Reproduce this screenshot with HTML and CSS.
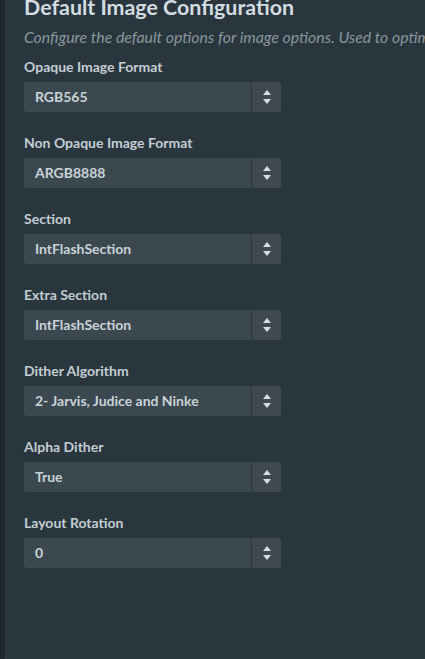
FILE: index.html
```html
<!doctype html>
<html lang="en">
<head>
  <meta charset="UTF-8">
  <meta name="viewport" content="width=device-width, initial-scale=1.0">
  <title>Default Image Configuration</title>
  <link rel="stylesheet" href="styles.css">
</head>
<body>
  <div class="gutter"></div>

  <main class="panel">
    <h1 class="panel-title">Default Image Configuration</h1>
    <p class="panel-desc">Configure the default options for image options. Used to optimize the generated images.</p>

    <div class="field">
      <label class="field-label">Opaque Image Format</label>
      <div class="select"><span class="select-value">RGB565</span><span class="select-arrows"></span></div>
    </div>

    <div class="field">
      <label class="field-label">Non Opaque Image Format</label>
      <div class="select"><span class="select-value">ARGB8888</span><span class="select-arrows"></span></div>
    </div>

    <div class="field">
      <label class="field-label">Section</label>
      <div class="select"><span class="select-value">IntFlashSection</span><span class="select-arrows"></span></div>
    </div>

    <div class="field">
      <label class="field-label">Extra Section</label>
      <div class="select"><span class="select-value">IntFlashSection</span><span class="select-arrows"></span></div>
    </div>

    <div class="field">
      <label class="field-label">Dither Algorithm</label>
      <div class="select"><span class="select-value">2- Jarvis, Judice and Ninke</span><span class="select-arrows"></span></div>
    </div>

    <div class="field">
      <label class="field-label">Alpha Dither</label>
      <div class="select"><span class="select-value">True</span><span class="select-arrows"></span></div>
    </div>

    <div class="field">
      <label class="field-label">Layout Rotation</label>
      <div class="select"><span class="select-value">0</span><span class="select-arrows"></span></div>
    </div>
  </main>
</body>
</html>
```

FILE: styles.css
```css
html, body { margin: 0; height: 100%; }
body { display: flex; background: #2a363d; font-family: Lato, "Open Sans", sans-serif; color: #c7d1d7; overflow: hidden; }

.gutter { width: 5px; flex: none; background: #1e282e; border-right: 1px dotted #3b4850; }

.panel { flex: 1; min-width: 0; padding: 0 0 0 18px; }
.panel-title { margin: -5px 0 0; font-size: 21.4px; line-height: 24px; font-weight: 700; color: #d2dce1; white-space: nowrap; }
.panel-desc { margin: 8px 0 0; font-size: 15.8px; line-height: 20px; font-style: italic; color: #8a979f; white-space: nowrap; overflow: hidden; }

.field { margin-top: 11px; }
.field + .field { margin-top: 22px; }
.field-label { display: block; font-size: 14px; line-height: 18px; font-weight: 700; color: #c3cdd3; margin-bottom: 6px; }

.select { display: flex; width: 257px; height: 30px; border-radius: 3px; background: #3c484f; overflow: hidden; }
.select-value { flex: 1; padding-left: 11px; font-size: 14px; line-height: 30px; font-weight: 700; color: #c9d3d8; border-right: 1px solid #2b353b; }
.select-arrows { width: 29px; position: relative; background: #3e4a50; }
.select-arrows::before,
.select-arrows::after { content: ""; position: absolute; left: 11px; border-left: 4.5px solid transparent; border-right: 4.5px solid transparent; }
.select-arrows::before { top: 8px; border-bottom: 5px solid #d5dde1; }
.select-arrows::after { top: 17px; border-top: 5px solid #d5dde1; }
```
